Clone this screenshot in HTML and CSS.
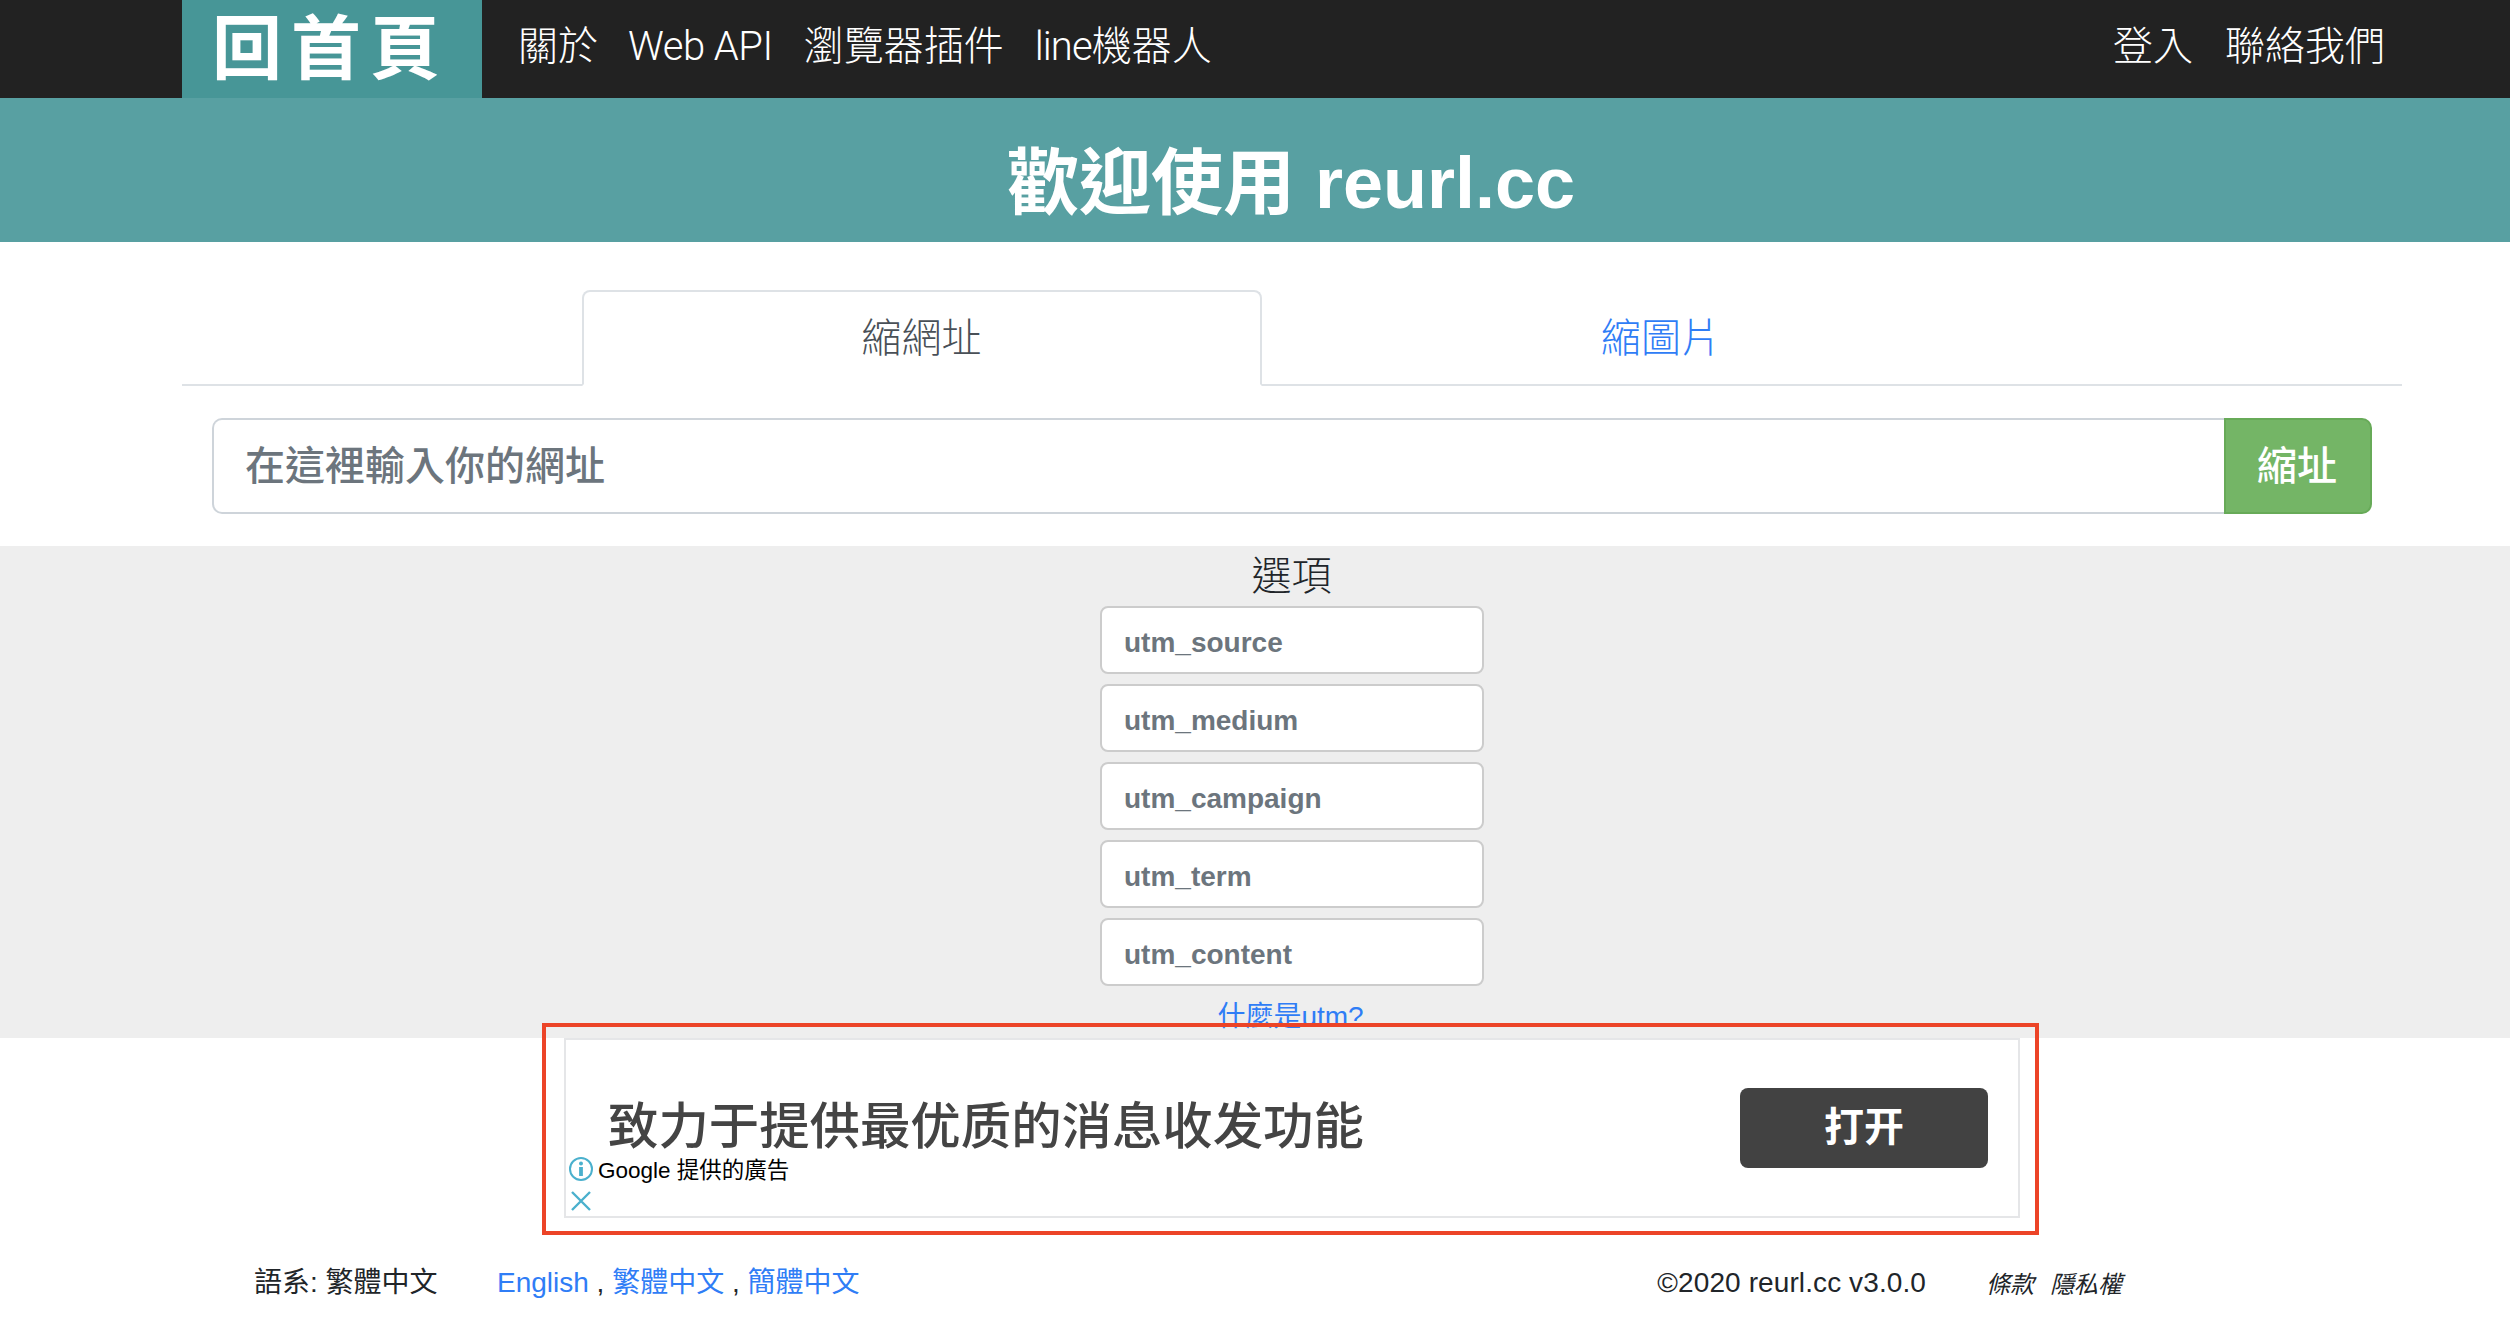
FILE: index.html
```html
<!DOCTYPE html>
<html lang="zh-Hant">
<head>
<meta charset="utf-8">
<title>reurl.cc</title>
<link rel="stylesheet" href="styles.css">
</head>
<body>
<header class="topbar">
  <nav class="container nav">
    <a class="brand" href="#">回首頁</a>
    <a class="nav-link" href="#">關於</a>
    <a class="nav-link nav-api" href="#"><span class="latin">Web API</span></a>
    <a class="nav-link" href="#">瀏覽器插件</a>
    <a class="nav-link nav-line" href="#"><span class="latin">line</span>機器人</a>
    <a class="nav-link nav-right" href="#">登入</a>
    <a class="nav-link" href="#">聯絡我們</a>
  </nav>
</header>
<section class="hero">
  <h1 class="container hero-title">歡迎使用 reurl.cc</h1>
</section>
<main>
  <div class="container tabs">
    <a class="tab tab-active" href="#">縮網址</a>
    <a class="tab tab-image" href="#">縮圖片</a>
  </div>
  <form class="container url-form">
    <input class="url-input" type="text" placeholder="在這裡輸入你的網址">
    <button class="url-button" type="button">縮址</button>
  </form>
  <section class="options">
    <div class="container options-list">
      <h2 class="options-title">選項</h2>
      <input class="utm" type="text" placeholder="utm_source">
      <input class="utm" type="text" placeholder="utm_medium">
      <input class="utm" type="text" placeholder="utm_campaign">
      <input class="utm" type="text" placeholder="utm_term">
      <input class="utm" type="text" placeholder="utm_content">
      <a class="utm-help" href="#">什麼是utm?</a>
    </div>
  </section>
  <div class="container ad-row">
    <div class="ad" lang="zh-Hans">
      <span class="ad-text">致力于提供最优质的消息收发功能</span>
      <a class="ad-button" href="#">打开</a>
      <div class="ad-choices" lang="zh-Hant">
        <div class="ad-label">
          <svg width="24" height="24" viewBox="0 0 24 24" fill="none" stroke="#4ab0cd" stroke-width="2"><circle cx="12" cy="12" r="11"/><path d="M12 10v9" stroke-width="3.8"/><circle cx="12" cy="6.6" r="2" fill="#4ab0cd" stroke="none"/></svg>
          <span class="ad-by">Google 提供的廣告</span>
        </div>
        <svg class="ad-close" width="20" height="20" viewBox="0 0 20 20" fill="none" stroke="#4ab0cd" stroke-width="2.4"><path d="M1 1l18 18M19 1L1 19"/></svg>
      </div>
      <div class="highlight"></div>
    </div>
  </div>
</main>
<footer class="container footer">
  <span class="lang-current">語系: 繁體中文</span>
  <span class="lang-list"><a href="#">English</a> , <a href="#">繁體中文</a> , <a href="#">簡體中文</a></span>
  <span class="copyright">©2020 reurl.cc v3.0.0</span>
  <span class="legal"><i>條款</i><i>隱私權</i></span>
</footer>
</body>
</html>
```
FILE: styles.css
```css
* { box-sizing: border-box; }
html { overflow: hidden; }
body {
  margin: 0;
  background: #fff;
  color: #212529;
  font: 400 28px/42px "Liberation Sans", "Noto Sans CJK TC", sans-serif;
}
a { color: #2f7df6; text-decoration: none; }
.container { width: 2220px; margin-left: 182px; }

.topbar { background: #222; }
.nav { display: flex; align-items: flex-start; height: 98px; padding-right: 1px; }
.nav .brand {
  width: 300px;
  height: 98px;
  margin-right: 20px;
  padding-left: 30px;
  background: #479697;
  color: #fff;
  font-size: 70px;
  font-weight: 700;
  line-height: 101px;
  letter-spacing: 9px;
}
.nav .nav-link {
  padding: 0 16px;
  color: #fff;
  font: 300 40px/86px "Noto Sans CJK TC", sans-serif;
}
.latin { font-family: Roboto, sans-serif; letter-spacing: -0.5px; }
.nav .nav-api { padding-left: 14px; padding-right: 15px; }
.nav .nav-line { padding-left: 15px; }
.nav-line .latin { letter-spacing: -0.9px; }
.nav .nav-right { margin-left: auto; }

.hero { background: #58a0a2; height: 144px; }
.hero-title {
  margin-top: 0;
  margin-bottom: 0;
  padding-right: 2px;
  font-size: 72px;
  line-height: 170px;
  text-align: center;
  color: #fff;
  height: 144px;
}

.tabs {
  display: flex;
  height: 96px;
  margin-top: 48px;
  padding-left: 400px;
  border-bottom: 2px solid #dee2e6;
}
.tab { height: 96px; font: 300 40px/87px "Noto Sans CJK TC", sans-serif; text-align: center; }
.tab-active {
  width: 680px;
  padding-right: 1px;
  border: 2px solid #dee2e6;
  border-bottom-color: #fff;
  border-radius: 8px 8px 0 0;
  background: #fff;
  color: #495057;
}
.tab-image { width: 798px; line-height: 91px; }

.url-form { display: flex; padding: 32px 30px; }
.url-input {
  flex: 1;
  height: 96px;
  padding: 0 31px 6px;
  border: 2px solid #ced4da;
  border-right: 0;
  border-radius: 10px 0 0 10px;
  font: 500 40px "Noto Sans CJK TC", sans-serif;
}
input::placeholder { color: #6c757d; opacity: 1; }
.url-button {
  width: 148px;
  height: 96px;
  padding: 0 2px 6px 0;
  border: 2px solid #67aa58;
  border-radius: 0 10px 10px 0;
  background: #74b566;
  color: #fff;
  font: 500 40px "Noto Sans CJK TC", sans-serif;
}

.options { height: 492px; background: #eee; }
.options-list { display: flex; flex-direction: column; align-items: center; gap: 10px; }
.options-title {
  height: 50px;
  margin: 0;
  padding-right: 1px;
  font: 300 40px/54px "Noto Sans CJK TC", sans-serif;
}
.utm {
  width: 384px;
  height: 68px;
  padding: 6px 22px 0;
  border: 2px solid #ccc;
  border-radius: 8px;
  background: #fff;
  font: 700 28px "Liberation Sans", sans-serif;
}
.utm-help { padding-right: 3px; line-height: 41px; }

.ad-row { display: flex; padding-left: 382px; }
.ad {
  position: relative;
  display: flex;
  align-items: center;
  justify-content: space-between;
  width: 1456px;
  height: 180px;
  padding: 0 30px 0 42px;
  border: 2px solid #e5e6e8;
  background: #fff;
  font-family: "Noto Sans CJK SC", sans-serif;
}
.ad-text { padding-bottom: 11px; font-size: 50.4px; font-weight: 500; line-height: 70px; color: #444; }
.ad-button {
  width: 248px;
  height: 80px;
  border-radius: 8px;
  background: #424242;
  color: #fff;
  font-size: 40px;
  font-weight: 700;
  line-height: 72px;
  text-align: center;
}
.ad-choices {
  position: absolute;
  left: 3px;
  top: 117px;
  color: #000;
  font: 400 22.5px/28px "Liberation Sans", "Noto Sans CJK TC", sans-serif;
}
.ad-label { display: flex; gap: 5px; height: 24px; }
.ad-choices svg { display: block; }
.ad-close { margin: 10px 0 0 2px; }
/* Red frame around the advertisement */
.highlight {
  position: absolute;
  left: -24px;
  top: -17px;
  width: 1497px;
  height: 212px;
  border: 4px solid #ec4427;
}

.footer { display: flex; padding: 44px 0 0 72px; }
.lang-current { width: 243px; }
.copyright { margin-left: auto; letter-spacing: 0.1px; }
.legal { display: flex; gap: 16px; width: 476px; padding-left: 60px; font-size: 24px; line-height: 46px; }
```
